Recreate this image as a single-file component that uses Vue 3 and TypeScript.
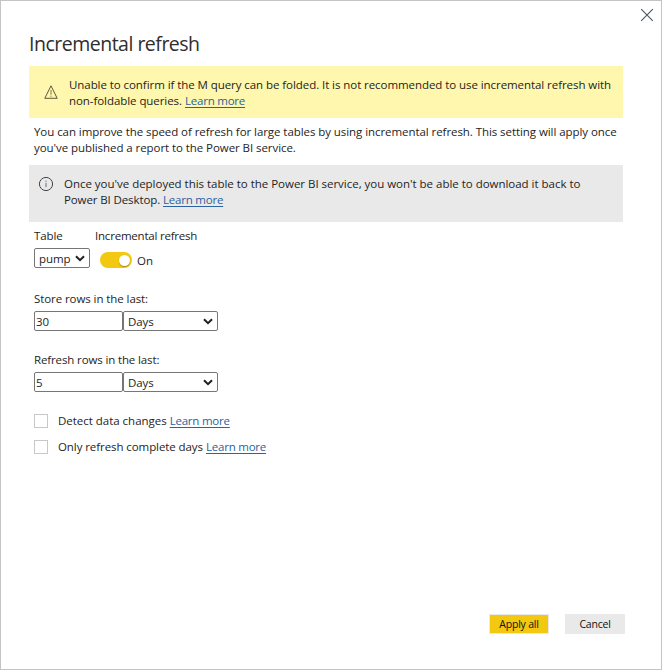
<script setup lang="ts">
import { ref } from 'vue'

interface Period {
  id: string
  label: string
  amount: string
  cls: string
}
interface Option {
  id: string
  label: string
  cls: string
}

const periods = ref<Period[]>([
  { id: 'store', label: 'Store rows in the last:', amount: '30', cls: 'store' },
  { id: 'refresh', label: 'Refresh rows in the last:', amount: '5', cls: 'refresh' },
])
const options: Option[] = [
  { id: 'detect', label: 'Detect data changes', cls: 'detect' },
  { id: 'complete', label: 'Only refresh complete days', cls: 'complete' },
]
const enabled = ref(true)
</script>

<template>
  <div class="dialog">
    <header class="top">
      <button class="close" aria-label="Close">
        <svg width="14" height="14" viewBox="0 0 14 14"><path d="M1.2 1.2 12.8 12.8M12.8 1.2 1.2 12.8" /></svg>
      </button>
    </header>
    <h1><span class="title">Incremental refresh</span></h1>

    <section class="notice warning">
      <svg class="warn-icon" width="16" height="16" viewBox="0 0 16 16">
        <path d="M8 1.8 14.2 14.3H1.8Z" />
        <path class="mark" d="M8 6v4.6M8 11.6v1.2" />
      </svg>
      <div>
        <div class="line"><span class="w1">Unable to confirm if the M query can be folded. It is not recommended to use incremental refresh with</span></div>
        <div class="line"><span class="w2">non-foldable queries.</span><a class="link">Learn more</a></div>
      </div>
    </section>

    <div class="intro">
      <div class="line"><span class="p1">You can improve the speed of refresh for large tables by using incremental refresh. This setting will apply once</span></div>
      <div class="line"><span class="p2">you've published a report to the Power BI service.</span></div>
    </div>

    <section class="notice info">
      <svg class="info-icon" width="16" height="16" viewBox="0 0 16 16">
        <circle cx="8" cy="8" r="6.6" />
        <path class="mark" d="M8 6.8v4.4M8 4.6v1.2" />
      </svg>
      <div>
        <div class="line"><span class="i1">Once you've deployed this table to the Power BI service, you won't be able to download it back to</span></div>
        <div class="line"><span class="i2">Power BI Desktop.</span><a class="link">Learn more</a></div>
      </div>
    </section>

    <div class="table-row">
      <div class="table-col">
        <div class="line"><span class="tl">Table</span></div>
        <div class="select small">
          <span class="pump">pump</span>
          <svg width="10" height="7" viewBox="0 0 10 7"><path d="M1 1.2 5 5.2 9 1.2" /></svg>
        </div>
      </div>
      <div class="switch-col">
        <div class="line"><span class="ir">Incremental refresh</span></div>
        <div class="switch-line">
          <span class="switch" role="switch" :aria-checked="enabled"><span class="knob"></span></span>
          <span class="on">{{ enabled ? 'On' : 'Off' }}</span>
        </div>
      </div>
    </div>

    <div v-for="p in periods" :key="p.id" class="period">
      <div class="line"><span :class="p.cls">{{ p.label }}</span></div>
      <div class="fields">
        <input v-model="p.amount" class="amount" type="text" />
        <div class="select unit">
          <span class="days">Days</span>
          <svg width="10" height="7" viewBox="0 0 10 7"><path d="M1 1.2 5 5.2 9 1.2" /></svg>
        </div>
      </div>
    </div>

    <div class="options">
      <div v-for="o in options" :key="o.id" class="option">
        <span class="box"></span>
        <span :class="o.cls">{{ o.label }}</span>
        <a class="link">Learn more</a>
      </div>
    </div>

    <footer>
      <button class="btn primary"><span class="apply">Apply all</span></button>
      <button class="btn"><span class="cancel">Cancel</span></button>
    </footer>
  </div>
</template>

<style>
body {
  background: #fff;
}
</style>

<style scoped>
.dialog {
  box-sizing: border-box;
  width: 662px;
  height: 670px;
  border: 1px solid #c4c4c4;
  display: flex;
  flex-direction: column;
  padding: 0 36px 35px 28px;
  background: #fff;
  color: #252423;
  font: 11.5px/16px "Open Sans", "Noto Sans", sans-serif;
  letter-spacing: -0.065px;
}
.top {
  height: 28px;
  display: flex;
  justify-content: flex-end;
  margin-right: -29px;
}
.close {
  border: 0;
  padding: 0;
  margin-top: 7px;
  width: 14px;
  height: 14px;
  background: none;
}
svg {
  display: block;
  flex: none;
  fill: none;
  stroke: #444;
}
.close svg {
  stroke: #4a5560;
  stroke-width: 1.1;
}
h1 {
  margin: 0;
  height: 37px;
  color: #2f2e2d;
  font-size: 19.5px;
  line-height: 29px;
  font-weight: 400;
  letter-spacing: -0.5px;
}
.line {
  display: flex;
  height: 16px;
  white-space: nowrap;
}
.notice {
  box-sizing: border-box;
  width: 594px;
  display: flex;
}
.warning {
  height: 52px;
  background: #fef7ad;
  padding: 11px 0 0 14px;
}
.warn-icon {
  margin: 7px 10px 0 0;
  stroke: #5c583e;
}
.warn-icon .mark {
  stroke: #8a7838;
}
.info {
  height: 57px;
  background: #e9e9e9;
  padding: 11px 0 0 9px;
}
.info-icon {
  margin-right: 10px;
}
.info-icon .mark {
  stroke: #5f7688;
}
.i1 {
  letter-spacing: -0.02px;
}
.i2 {
  letter-spacing: -0.11px;
}
.tl {
  letter-spacing: -0.12px;
}
.store {
  letter-spacing: -0.08px;
}
.refresh {
  letter-spacing: -0.13px;
}
.ir {
  letter-spacing: -0.21px;
}
.detect {
  letter-spacing: -0.02px;
}
.complete {
  letter-spacing: -0.08px;
}
.intro {
  height: 41px;
  padding: 6px 0 0 5px;
}
.link {
  color: #2b62a0;
  text-decoration: underline;
  text-underline-offset: 2px;
  margin-left: 3px;
  letter-spacing: -0.22px;
}
.table-row {
  display: flex;
  height: 69px;
  padding: 6px 0 0 5px;
  box-sizing: border-box;
}
.table-col {
  width: 61px;
}
.select {
  box-sizing: border-box;
  height: 20px;
  border: 1px solid #767676;
  border-radius: 2px;
  display: flex;
  align-items: center;
  justify-content: space-between;
  padding: 1px 4px 0 4px;
  background: #fff;
}
.select svg {
  stroke: #202020;
  stroke-width: 2;
  margin-top: -1px;
}
.small {
  width: 56px;
  margin-top: 4px;
}
.switch-line {
  display: flex;
  margin: 8px 0 0 5px;
}
.switch {
  box-sizing: border-box;
  width: 32px;
  height: 16px;
  border-radius: 8px;
  background: #f2c811;
  display: flex;
  justify-content: flex-end;
  padding: 3px 2px;
}
.knob {
  width: 11px;
  height: 11px;
  border-radius: 50%;
  background: #fff;
  box-shadow: 0 1px 1px rgba(0, 0, 0, 0.3);
}
.on {
  margin: 1px 0 0 5px;
}
.period {
  height: 61px;
  padding-left: 5px;
}
.fields {
  display: flex;
  margin-top: 4px;
}
.amount {
  box-sizing: border-box;
  width: 89px;
  height: 20px;
  border: 1px solid #767676;
  border-radius: 2px;
  padding: 1px 1px 0;
  font: inherit;
  color: inherit;
  outline: 0;
}
.unit {
  width: 95px;
}
.options {
  padding: 0 0 0 5px;
}
.option {
  display: flex;
  align-items: flex-start;
  height: 26px;
  white-space: nowrap;
}
.box {
  box-sizing: border-box;
  width: 14px;
  height: 14px;
  border: 1px solid #c8c8c8;
  margin: 1px 10px 0 0;
}
footer {
  margin-top: auto;
  display: flex;
  justify-content: flex-end;
  gap: 16px;
}
.btn {
  box-sizing: border-box;
  width: 60px;
  height: 20px;
  border: 1px solid #e9e9e9;
  padding: 0;
  background: #e9e9e9;
  color: #111;
  font: 10.5px/18px "Open Sans", "Noto Sans", sans-serif;
  letter-spacing: -0.22px;
}
.primary {
  background: #f2c811;
}
</style>
